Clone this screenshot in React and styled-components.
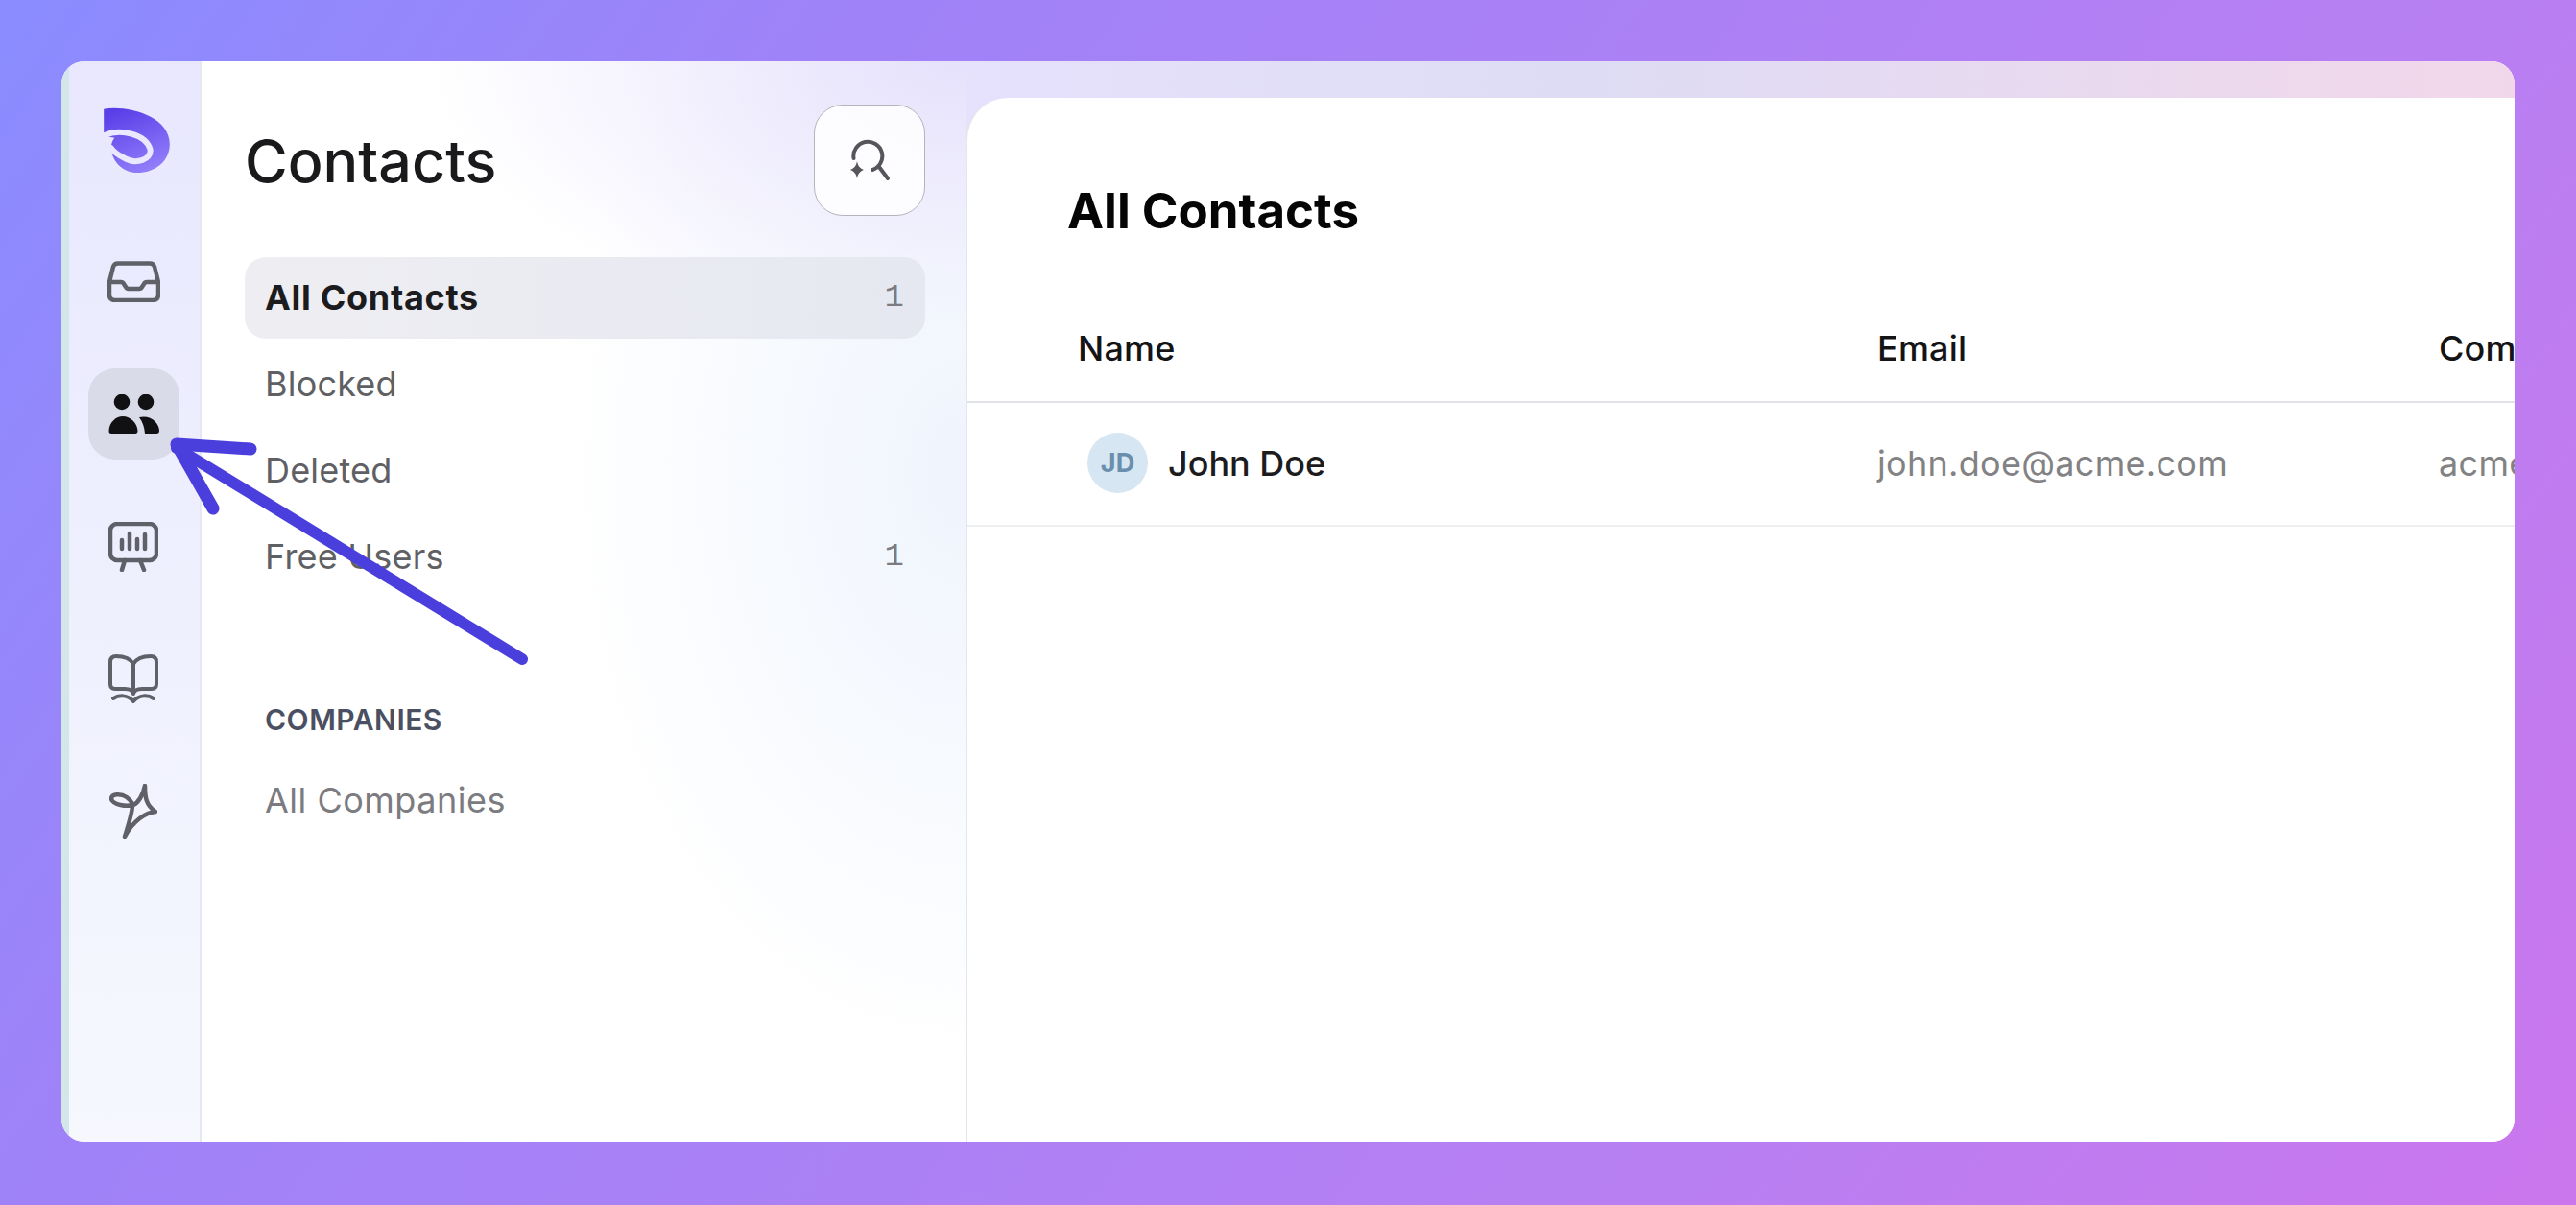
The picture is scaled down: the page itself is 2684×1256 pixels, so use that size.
import React from "react";
import styled, { createGlobalStyle } from "styled-components";

const GlobalStyle = createGlobalStyle`
    * { box-sizing: border-box; }
    html, body { margin: 0; padding: 0; }
    body { font-family: Inter, "Liberation Sans", sans-serif; }
`;

const Page = styled.div`
    position: relative;
    width: 2684px;
    height: 1256px;
    padding: 64px 64px 66px;
    overflow: hidden;
    background: linear-gradient(125deg, #8a8cff 0%, #9f82f8 25%, #b97ff2 75%, #cb76ed 100%);
`;

const Window = styled.div`
    display: flex;
    width: 100%;
    height: 100%;
    border-radius: 24px;
    overflow: hidden;
    background: #fff;
`;

const Rail = styled.nav`
    width: 146px;
    flex: none;
    display: flex;
    flex-direction: column;
    align-items: center;
    gap: 43px;
    padding: 48px 2px 0 0;
    border-left: 8px solid #d3e6ea;
    border-right: 2px solid #e6e8f1;
    background: linear-gradient(180deg, #e8e7fe 0%, #eff0fe 50%, #f6f8fe 100%);
`;

const Logo = styled.svg`
    width: 69px;
    height: 68px;
    margin: 0 0 23px 6px;
`;

const RailButton = styled.div`
    width: 95px;
    height: 95px;
    display: flex;
    align-items: center;
    justify-content: center;
    border-radius: 28px;
    background: ${(p) => (p.$active ? "#d9dbe8" : "transparent")};
    color: #5f6068;
`;

const Sidebar = styled.aside`
    width: 796px;
    flex: none;
    padding: 45px 42px 0 45px;
    background:
        radial-gradient(ellipse 560px 280px at 100% 0, #e6e1fc 0%, rgba(230, 225, 252, 0) 100%),
        radial-gradient(ellipse 420px 620px at 100% 38%, #eff4fd 0%, rgba(239, 244, 253, 0) 100%),
        #fff;
`;

const SidebarHead = styled.div`
    display: flex;
    align-items: center;
    justify-content: space-between;
    margin-bottom: 43px;
`;

const Title = styled.h1`
    margin: 2px 0 0;
    font-size: 61px;
    font-weight: 500;
    color: #1a1a1c;
`;

const SearchButton = styled.button`
    width: 116px;
    height: 116px;
    padding: 0;
    display: flex;
    align-items: center;
    justify-content: center;
    border: 1.5px solid #b4b4bc;
    border-radius: 30px;
    background: rgba(255, 255, 255, 0.85);
`;

const NavList = styled.div`
    display: flex;
    flex-direction: column;
    gap: 5px;
`;

const NavItem = styled.div`
    height: 85px;
    padding: 0 22px 2px 21px;
    display: flex;
    align-items: center;
    justify-content: space-between;
    border-radius: 22px;
    font-size: 36px;
    font-weight: ${(p) => (p.$active ? 700 : 400)};
    letter-spacing: ${(p) => (p.$active ? "0.7px" : p.$muted ? "0.5px" : "0.2px")};
    color: ${(p) => (p.$active ? "#1c1c1e" : p.$muted ? "#7b7b80" : "#5f6064")};
    background: ${(p) => (p.$active ? "linear-gradient(90deg, #eeeef2, #e6e8f1)" : "none")};
`;

const Count = styled.span`
    font-family: "Liberation Mono", monospace;
    font-size: 34px;
    font-weight: 400;
    letter-spacing: 0;
    color: #7c7c80;
`;

const SectionLabel = styled.div`
    margin: 107px 0 22px;
    padding-left: 21px;
    height: 40px;
    line-height: 40px;
    font-size: 30px;
    font-weight: 600;
    letter-spacing: 0.5px;
    color: #4a5061;
`;

const Main = styled.section`
    flex: 1;
    min-width: 0;
    padding-top: 38px;
    background: linear-gradient(90deg, #e6e1fc 0%, #dedcf5 40%, #f2d7ea 100%);
`;

const Panel = styled.div`
    height: 100%;
    overflow: hidden;
    background: #fff;
    border-left: 2px solid #e4e6ef;
    border-top-left-radius: 44px;
`;

const PanelTitle = styled.h2`
    margin: 0;
    height: 204px;
    padding: 88px 0 0 104px;
    line-height: 60px;
    font-size: 51px;
    font-weight: 700;
    color: #050505;
`;

const TableRow = styled.div`
    display: grid;
    grid-template-columns: 833px 585px 400px;
    align-items: center;
    width: 1800px;
    padding: ${(p) => (p.$head ? "2px 0 0 115px" : "0 0 2px 115px")};
    height: ${(p) => (p.$head ? "114px" : "129px")};
    border-bottom: 2px solid ${(p) => (p.$head ? "#e2e3e6" : "#eeeff1")};
    font-size: 36px;
`;

const HeadCell = styled.div`
    font-weight: 500;
    letter-spacing: 0.2px;
    color: #141416;
`;

const NameCell = styled.div`
    display: flex;
    align-items: center;
    gap: 21px;
    padding-left: 10px;
    font-weight: 500;
    color: #1c1c1e;
`;

const Avatar = styled.div`
    width: 63px;
    height: 63px;
    display: flex;
    align-items: center;
    justify-content: center;
    border-radius: 50%;
    background: #d6e6f2;
    color: #6a8fae;
    font-size: 27px;
    font-weight: 700;
`;

const MutedCell = styled.div`
    color: #828284;
    letter-spacing: 0.3px;
    white-space: nowrap;
`;

const Arrow = styled.svg`
    position: absolute;
    left: 160px;
    top: 440px;
    width: 400px;
    height: 260px;
    pointer-events: none;
`;

const LogoMark = () => (
    <Logo viewBox="0 0 207 205">
        <defs>
            <linearGradient id="logoFill" x1="0.3" y1="0" x2="0.7" y2="1">
                <stop offset="0" stopColor="#5a3fe8" />
                <stop offset="1" stopColor="#9480fb" />
            </linearGradient>
        </defs>
        <path
            d="M0 5C70 -8 207 25 207 115C207 170 160 205 105 205C60 205 28 172 22 128C24 112 28 102 34 96L0 90Z"
            fill="url(#logoFill)"
        />
        <path
            d="M2 88C50 66 132 82 146 132C150 165 102 178 70 162C50 152 32 142 22 126"
            fill="none"
            stroke="#e9e8fe"
            strokeWidth="18"
            strokeLinecap="round"
        />
    </Logo>
);

const lineProps = {
    fill: "none",
    stroke: "currentColor",
    strokeWidth: 4.5,
    strokeLinecap: "round",
    strokeLinejoin: "round",
};

const InboxIcon = () => (
    <svg width="55" height="43" viewBox="0 0 55 43" {...lineProps}>
        <path d="M11 2.5H44Q48 2.5 49 6L53 22V35Q53 41 47 41H8Q2 41 2 35V22L6 6Q7 2.5 11 2.5Z" />
        <path d="M2 22H14Q16 22 17 24L19 27Q20 29 22 29H33Q35 29 36 27L38 24Q39 22 41 22H53" />
    </svg>
);

const PeopleIcon = () => (
    <svg width="53" height="41" viewBox="0 0 53 41" fill="#111114">
        <circle cx="14" cy="8" r="8.3" />
        <circle cx="39" cy="8" r="8.3" />
        <path d="M0.5 38C1 29 8 23 15 23C23 23 30 30 30.5 38Q30.5 41 28 41H3Q0.3 41 0.5 38Z" />
        <path d="M32 24C44 21 53 30 53 38Q53 41 50 41H38C37.5 35 36 29 32 24Z" />
    </svg>
);

const ChartIcon = () => (
    <svg width="52" height="52" viewBox="0 0 52 52" {...lineProps}>
        <rect x="2" y="2" width="48" height="38" rx="7" />
        <path d="M17 40L14 50M33 40L37 50" />
        <path d="M14 19V28M22 12V28M30 18V28M38 13V28" />
    </svg>
);

const BookIcon = () => (
    <svg width="52" height="51" viewBox="0 0 52 51" {...lineProps} strokeWidth="4">
        <path d="M26 10C22 3 14 2 8 2Q2 2 2 8V31Q2 36 7 36H17C21 36 25 37 26 41C27 37 31 36 35 36H45Q50 36 50 31V8Q50 2 44 2C38 2 30 3 26 10V41" />
        <path d="M5 46C11 42 20 42 26 49C32 42 41 42 47 46" />
    </svg>
);

const SparkIcon = () => (
    <svg width="50" height="58" viewBox="0 0 50 58" {...lineProps}>
        <path d="M37 2C37 14 38 22 48 29C38 30 25 38 16 55C20 42 24 30 24 22C18 24 4 22 2 16C2 10 12 10 18 14C22 17 24 20 25 22C30 20 35 12 37 2Z" />
    </svg>
);

const SearchSparkIcon = () => (
    <svg width="44" height="44" viewBox="0 0 44 44" fill="none" stroke="#55565c" strokeWidth="4" strokeLinecap="round">
        <path d="M5.5 20A15 15 0 1 1 25 32" />
        <path d="M32 29L41 41" />
        <path d="M9 23C10 28 11.5 30 16 32C11.5 34 10 36 9 41C8 36 6.5 34 2 32C6.5 30 8 28 9 23Z" fill="#55565c" stroke="none" />
    </svg>
);

export default function App() {
    return (
        <Page>
            <GlobalStyle />
            <Window>
                <Rail>
                    <LogoMark />
                    <RailButton><InboxIcon /></RailButton>
                    <RailButton $active><PeopleIcon /></RailButton>
                    <RailButton><ChartIcon /></RailButton>
                    <RailButton><BookIcon /></RailButton>
                    <RailButton><SparkIcon /></RailButton>
                </Rail>
                <Sidebar>
                    <SidebarHead>
                        <Title>Contacts</Title>
                        <SearchButton><SearchSparkIcon /></SearchButton>
                    </SidebarHead>
                    <NavList>
                        <NavItem $active>All Contacts<Count>1</Count></NavItem>
                        <NavItem>Blocked</NavItem>
                        <NavItem>Deleted</NavItem>
                        <NavItem>Free Users<Count>1</Count></NavItem>
                    </NavList>
                    <SectionLabel>COMPANIES</SectionLabel>
                    <NavItem $muted>All Companies</NavItem>
                </Sidebar>
                <Main>
                    <Panel>
                        <PanelTitle>All Contacts</PanelTitle>
                        <TableRow $head>
                            <HeadCell>Name</HeadCell>
                            <HeadCell>Email</HeadCell>
                            <HeadCell>Company</HeadCell>
                        </TableRow>
                        <TableRow>
                            <NameCell><Avatar>JD</Avatar>John Doe</NameCell>
                            <MutedCell>john.doe@acme.com</MutedCell>
                            <MutedCell>acme.com</MutedCell>
                        </TableRow>
                    </Panel>
                </Main>
            </Window>
            <Arrow viewBox="0 0 400 260" fill="none" stroke="#4a3fdc" strokeLinecap="round" strokeLinejoin="round">
                <path d="M384 247L24 27" strokeWidth="12" />
                <path d="M101 28L24 23L62 90" strokeWidth="13" />
            </Arrow>
        </Page>
    );
}
